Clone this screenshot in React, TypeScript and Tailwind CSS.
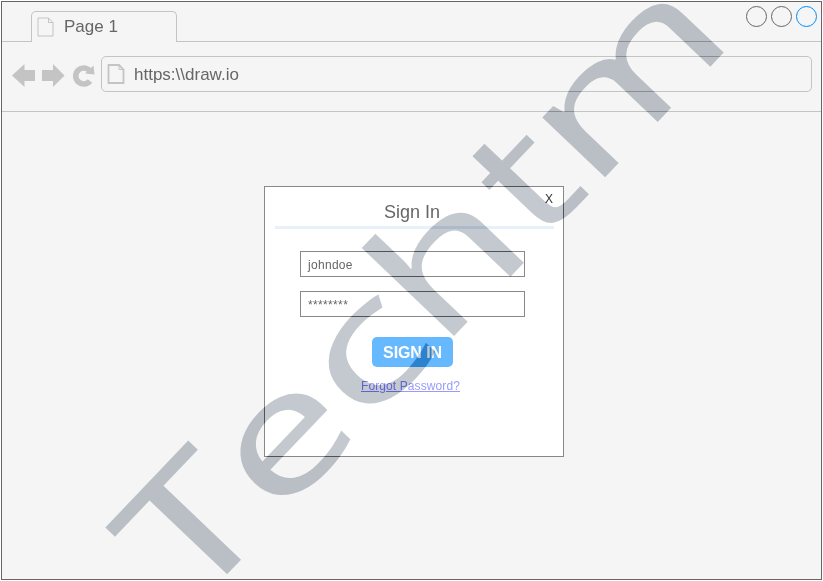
const NOTO = "'Noto Sans', sans-serif";
const DEJAVU = "'DejaVu Sans', sans-serif";

const WATERMARK = [
  { ch: "T", x: -3, w: 1.325, h: 0.995, font: NOTO, size: 169.5 },
  { ch: "e", x: 122, w: 1.33, h: 0.96, font: NOTO, size: 169.5 },
  { ch: "c", x: 248, w: 1.43, h: 0.95, font: NOTO, size: 169.5 },
  { ch: "h", x: 359.5, w: 1.32, h: 0.99, font: NOTO, size: 169.5 },
  { ch: "t", x: 503.5, w: 1.2, h: 0.985, font: DEJAVU, size: 160 },
  { ch: "m", x: 578.5, w: 1.32, h: 0.955, font: NOTO, size: 169.5 },
];

function PageIcon({ className, stroke }: { className: string; stroke: number }) {
  return (
    <svg viewBox="0 0 17 20" className={className} fill="none" stroke="#c4c4c4" strokeWidth={stroke}>
      <path d="M1 1H11.5L16 5.5V19H1Z" />
      <path d="M11.5 1V5.500H16" strokeWidth="1" />
    </svg>
  );
}

function Watermark() {
  return (
    <svg className="pointer-events-none absolute inset-0 h-[581px] w-[823px] overflow-visible mix-blend-difference" viewBox="0 0 823 581">
      <g transform="translate(193 610) rotate(-46.4)" fill="#3b3630">
        {WATERMARK.map((g, i) => (
          <text key={i} transform={`translate(${g.x} 0) scale(${g.w} ${g.h})`} fontFamily={g.font} fontSize={g.size}>
            {g.ch}
          </text>
        ))}
      </g>
    </svg>
  );
}

export default function App() {
  return (
    <div className="relative isolate h-[581px] w-[823px] bg-white pl-px pt-px font-['Liberation_Sans',Arial,sans-serif] text-[#666]">
      <div className="flex h-[579px] w-[821px] flex-col border border-[#666] bg-[#f5f5f5]">
        <header className="flex h-10 shrink-0">
          <div className="w-[29px] border-b border-[#c4c4c4]" />
          <div className="mt-[9px] flex w-[146px] items-start rounded-t-[5px] border border-b-0 border-[#c4c4c4] pl-[5px] pt-[5px]">
            <PageIcon className="h-[20px] w-[17px]" stroke={1} />
            <span className="ml-[10px] text-[17px] leading-[19px]">Page 1</span>
          </div>
          <div className="flex flex-1 justify-end gap-1 border-b border-[#c4c4c4] pr-1 pt-1">
            <span className="size-[21px] rounded-full border border-[#666]" />
            <span className="size-[21px] rounded-full border border-[#666]" />
            <span className="size-[21px] rounded-full border border-[#008cff]" />
          </div>
        </header>
        <nav className="flex h-[70px] shrink-0 items-start border-b border-[#c4c4c4] pl-[10px] pt-[14px]">
          <svg className="mt-[7px] h-[24px] w-[84px]" viewBox="12 63 84 24" fill="#c4c4c4">
            <path d="M12 75.5 24.5 64V70H35V81H24.5V87Z" />
            <path d="M64.5 75.5 53 64V70H42V81H53V87Z" />
            <path d="M90 81A8 8 0 1 1 90 71" fill="none" stroke="#c4c4c4" strokeWidth="5.600" />
            <path d="M93.500 65.500L94.500 74.500L85 73.500Z" />
          </svg>
          <div className="ml-[5px] flex h-[36px] w-[711px] items-center rounded-[5px] border border-[#c4c4c4] pl-[5px]">
            <PageIcon className="h-[20px] w-[18px]" stroke={1.8} />
            <span className="ml-[9px] text-[17px] leading-[19px]">https:\\draw.io</span>
          </div>
        </nav>
        <main className="flex flex-1 items-start pl-[262px] pt-[74px]">
          <section className="h-[271px] w-[300px] border border-[#888] bg-white">
            <div className="ml-[10px] flex h-[42px] w-[279px] items-start border-b-[3px] border-[#e6f1fc]">
              <h1 className="ml-[109px] mt-[14px] w-[161px] text-[18px] leading-[22px]">Sign In</h1>
              <span className="mt-[4px] text-[12px] leading-[16px] text-[#333]">X</span>
            </div>
            <form className="flex flex-col items-start pl-[35px] pt-[22px]">
              <div className="flex h-[26px] w-[225px] items-center border border-[#888] pl-[7px] pt-px text-[12px] tracking-[0.3px]">johndoe</div>
              <div className="mt-[14px] flex h-[26px] w-[225px] items-center border border-[#888] pl-[7px] pt-px text-[12px] tracking-[0.35px]">********</div>
              <button type="button" className="ml-[72px] mt-[20px] h-[30px] w-[81px] rounded-[5px] bg-[#66b8ff] pt-px text-[16px] font-bold leading-[20px] tracking-[-0.1px] text-white">SIGN IN</button>
              <a className="ml-[61px] mt-[11px] text-[12px] leading-[16px] tracking-[0.1px] text-[#9999ff] underline">Forgot Password?</a>
            </form>
          </section>
        </main>
      </div>
      <Watermark />
    </div>
  );
}
